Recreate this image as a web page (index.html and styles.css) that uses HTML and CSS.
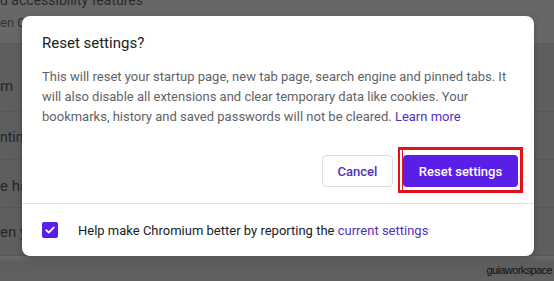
FILE: index.html
```html
<!DOCTYPE html>
<html>
<head>
<meta charset="utf-8">
<link rel="stylesheet" href="styles.css">
</head>
<body>
<div class="page">
  <div class="row row-top">
    <div class="bg-title">d accessibility features</div>
    <div class="bg-sub">en Chr</div>
  </div>
  <div class="row row-a"><span>m</span></div>
  <div class="row row-b"><span>ntinu</span></div>
  <div class="row row-c"><span>e ha</span></div>
  <div class="row row-d"><span>en y</span></div>
  <div class="row-bottom"></div>
</div>

<div class="dialog">
  <div class="dialog-body">
    <h1 class="dialog-title">Reset settings?</h1>
    <p class="dialog-text">This will reset your startup page, new tab page, search engine and pinned tabs. It will also disable all extensions and clear temporary data like cookies. Your bookmarks, history and saved passwords will not be cleared. <a class="link">Learn more</a></p>
    <div class="actions">
      <button class="btn btn-cancel">Cancel</button>
      <div class="highlight">
        <button class="btn btn-primary">Reset settings</button>
      </div>
    </div>
  </div>
  <div class="dialog-footer">
    <span class="checkbox">
      <svg width="12" height="12" viewBox="0 0 12 12"><path d="M2.2 6.2 L4.8 8.6 L9.8 3.4" fill="none" stroke="#ffffff" stroke-width="1.8" stroke-linecap="round" stroke-linejoin="round"/></svg>
    </span>
    <span class="footer-text">Help make Chromium better by reporting the <a class="link">current settings</a></span>
  </div>
</div>

<div class="watermark">guiaworkspace</div>
</body>
</html>
```

FILE: styles.css
```css
html, body {
  margin: 0;
  padding: 0;
}
body {
  width: 554px;
  height: 281px;
  overflow: hidden;
  background: #5e5e5e;
  font-family: Roboto, "Liberation Sans", sans-serif;
  position: relative;
}
.page {
  display: flex;
  flex-direction: column;
  height: 281px;
  color: #262626;
  font-size: 14px;
}
.row {
  display: flex;
  align-items: center;
  border-bottom: 1px solid #575757;
  white-space: nowrap;
  box-sizing: border-box;
  line-height: 18px;
}
.row-top {
  height: 44px;
  background: #676767;
  flex-direction: column;
  align-items: flex-start;
  justify-content: flex-start;
  border-bottom: 1px solid #5a5a5a;
}
.bg-title {
  font-size: 14px;
  line-height: 16px;
  margin-top: -8px;
  color: #2a2a2a;
}
.bg-sub {
  font-size: 13px;
  line-height: 18px;
  margin-top: 6px;
  color: #333333;
}
.row-a { height: 68px; font-size: 15px; padding-top: 16px; }
.row-b { height: 48px; font-size: 14px; padding-top: 2px; }
.row-c { height: 48px; font-size: 15px; padding-top: 4px; }
.row-d { height: 48px; font-size: 15px; }
.row-bottom {
  flex: 1;
  background: linear-gradient(#6a6a6a, #5c5c5c 30%, #616161);
}
.dialog {
  position: absolute;
  left: 22px;
  top: 16px;
  width: 512px;
  height: 240px;
  background: #ffffff;
  border-radius: 8px;
  box-shadow: 0 2px 6px rgba(0,0,0,0.25);
  display: flex;
  flex-direction: column;
}
.dialog-body {
  padding: 17px 16px 16px 20px;
  border-bottom: 1px solid #e3e3e3;
}
.dialog-title {
  margin: 0;
  font-size: 15px;
  line-height: 20px;
  font-weight: 400;
  color: #202124;
}
.dialog-text {
  margin: 14px 0 0 0;
  font-size: 13px;
  line-height: 20px;
  color: #5f6368;
  padding-right: 4px;
}
.link {
  color: #5133b8;
  text-decoration: none;
}
.actions {
  display: flex;
  justify-content: flex-end;
  gap: 10px;
  margin-top: 28px;
}
.btn {
  height: 32px;
  border-radius: 4px;
  font-family: Roboto, "Liberation Sans", sans-serif;
  font-size: 13px;
  font-weight: 500;
  padding: 0;
  cursor: pointer;
}
.btn-cancel {
  width: 71px;
  background: #ffffff;
  border: 1px solid #dadce0;
  color: #4c34b4;
}
.btn-primary {
  width: 115px;
  background: #5a1fe7;
  border: none;
  color: #ffffff;
  display: block;
}
.highlight {
  position: relative;
}
.highlight::after {
  content: "";
  position: absolute;
  left: -5px;
  right: -5px;
  top: -8px;
  bottom: -6px;
  border: 3px solid #e0121c;
  border-left-width: 2px;
  pointer-events: none;
}
.highlight::before {
  content: "";
  position: absolute;
  left: -1px;
  top: -5px;
  bottom: -3px;
  width: 1px;
  background: #e0121c;
}
.dialog-footer {
  flex: 1;
  display: flex;
  align-items: center;
  padding: 0 20px;
  gap: 20px;
}
.checkbox {
  width: 16px;
  height: 16px;
  border-radius: 2px;
  background: #5a1fe7;
  display: flex;
  align-items: center;
  justify-content: center;
}
.footer-text {
  font-size: 13px;
  color: #202124;
  line-height: 20px;
  padding-top: 1px;
}
.watermark {
  position: absolute;
  right: 2px;
  bottom: 4px;
  font-family: "Liberation Sans", sans-serif;
  font-size: 11px;
  line-height: 13px;
  color: #111111;
  letter-spacing: -0.6px;
}
```
